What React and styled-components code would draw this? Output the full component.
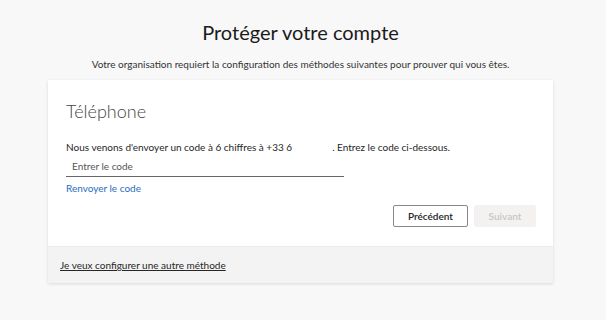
import React from 'react';
import styled, { createGlobalStyle } from 'styled-components';

const GlobalStyle = createGlobalStyle`
  html, body {
    margin: 0;
    padding: 0;
    background: #f8f8f8;
    font-family: "Segoe UI", Lato, "Liberation Sans", sans-serif;
    color: #262626;
  }
`;

const Page = styled.div`
  width: 601px;
  height: 320px;
  display: flex;
  flex-direction: column;
  align-items: center;
  padding-top: 17px;
  box-sizing: border-box;
`;

const Title = styled.h1`
  margin: 0;
  font-size: 20px;
  font-weight: 400;
  line-height: 30px;
  color: #1b1b1b;
`;

const Subtitle = styled.p`
  margin: 10px 0 0;
  font-size: 10px;
  line-height: 14px;
  color: #333;
`;

const Card = styled.section`
  margin-top: 9px;
  width: 505px;
  background: #fff;
  box-shadow: 0 1px 3px rgba(0, 0, 0, 0.12);
  display: flex;
  flex-direction: column;
`;

const Body = styled.div`
  padding: 18px 17px 19px 18px;
  display: flex;
  flex-direction: column;
`;

const MethodTitle = styled.h2`
  margin: 0;
  font-size: 18px;
  font-weight: 300;
  line-height: 26px;
  color: #444;
`;

const Info = styled.p`
  margin: 16px 0 0;
  font-size: 10px;
  line-height: 14px;
  color: #262626;
`;

const Hidden = styled.span`
  display: inline-block;
  width: 40px;
`;

const CodeInput = styled.input`
  margin-top: 3px;
  width: 278px;
  box-sizing: border-box;
  border: none;
  border-bottom: 1px solid #666;
  padding: 2px 6px 3px;
  font-family: inherit;
  font-size: 10px;
  line-height: 14px;
  outline: none;
  background: transparent;
  &::placeholder {
    color: #555;
  }
`;

const Resend = styled.a`
  margin-top: 4px;
  font-size: 10px;
  line-height: 14px;
  color: #2a6cc4;
  text-decoration: none;
  align-self: flex-start;
`;

const Actions = styled.div`
  margin-top: 10px;
  display: flex;
  justify-content: flex-end;
  gap: 6px;
`;

const Button = styled.button`
  height: 22px;
  padding: 0;
  width: ${p => p.$width}px;
  font-family: inherit;
  font-size: 10px;
  font-weight: 600;
  border-radius: 2px;
  border: 1px solid ${p => (p.$disabled ? '#f3f2f1' : '#8a8886')};
  background: ${p => (p.$disabled ? '#f3f2f1' : '#fff')};
  color: ${p => (p.$disabled ? '#c8c6c4' : '#262626')};
`;

const Footer = styled.div`
  background: #f3f3f3;
  border-top: 1px solid #ececec;
  height: 36px;
  display: flex;
  align-items: center;
  padding-left: 12px;
`;

const FooterLink = styled.a`
  font-size: 10px;
  color: #262626;
  text-decoration: underline;
`;

export default function App() {
  return (
    <>
      <GlobalStyle />
      <Page>
        <Title>Protéger votre compte</Title>
        <Subtitle>
          Votre organisation requiert la configuration des méthodes suivantes pour prouver qui vous êtes.
        </Subtitle>
        <Card>
          <Body>
            <MethodTitle>Téléphone</MethodTitle>
            <Info>
              Nous venons d'envoyer un code à 6 chiffres à +33 6<Hidden />. Entrez le code ci-dessous.
            </Info>
            <CodeInput placeholder="Entrer le code" />
            <Resend href="#">Renvoyer le code</Resend>
            <Actions>
              <Button $width={75}>Précédent</Button>
              <Button $width={62} $disabled>Suivant</Button>
            </Actions>
          </Body>
          <Footer>
            <FooterLink href="#">Je veux configurer une autre méthode</FooterLink>
          </Footer>
        </Card>
      </Page>
    </>
  );
}
